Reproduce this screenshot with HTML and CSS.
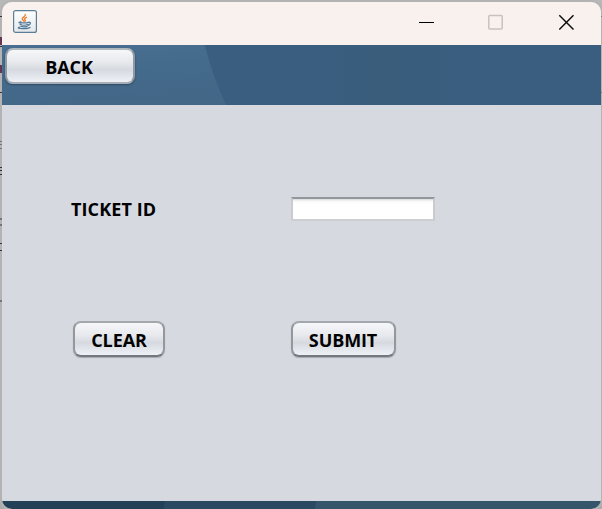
FILE: index.html
```html
<!DOCTYPE html>
<html lang="en">
<head>
<meta charset="utf-8">
<title>Ticket</title>
<link rel="stylesheet" href="styles.css">
</head>
<body>
<svg class="desktop" width="602" height="509" aria-hidden="true">
  <path d="M0 16.500h2M0 46.500h2M0 92.500h2M0 167.500h2M0 170.500h2M0 174.500h2M0 243.500h2M0 250.500h2" stroke="#333"/>
  <path d="M0 141.500h2M0 144.500h2M0 148.500h2" stroke="#74747a"/>
  <path d="M0 219h2M0 225h2M0 301h2" stroke="#74747a" stroke-width="2"/>
  <path d="M0 41h2M0 69h2" stroke="#643653" stroke-width="8"/>
  <path d="M601 16.500h1M601 92.500h1" stroke="#987653"/>
</svg>
<div class="window">
  <header class="titlebar">
    <svg class="java" width="24" height="24" viewBox="0 0 24 24">
      <defs><linearGradient id="tile" x2="0" y2="1"><stop stop-color="#fff"/><stop offset="1" stop-color="#e3e7ea"/></linearGradient></defs>
      <rect x=".6" y=".6" width="22.800" height="21.800" rx="2" fill="url(#tile)" stroke="#5b7e98" stroke-width="1.200"/>
      <g fill="none" stroke-linecap="round">
        <path d="M12.300 4.500c.8 2-3.600 2.700-3 4.700.2.700 1 1.200 1.400 1.900M13.500 7.400c-2 .9-2.500 1.600-1.400 2.600.5.500.2 1-.3 1.400" stroke="#ef8432" stroke-width="1.400"/>
        <path d="M8 11.800c-3.600.7-2 1.300 3.500 1.100 2 0 3.300-.3 4-.6M7 14.300c1.700 1 5.800 1 8 .2M7.700 16.200c1.900.8 4.700.8 6.400.1M15.500 12.300c3-.4 2.100 2.500-.3 3.100M6.300 17.200c-4.400 1.500 8.200 2.200 10.700.2" stroke="#547a99" stroke-width="1.300"/>
      </g>
    </svg>
    <svg class="controls" width="156" height="18" viewBox="0 0 156 18" fill="none">
      <path d="M0 9.500h15" stroke="#000"/>
      <rect x="69.800" y="2.600" width="13.400" height="13.400" rx="1" stroke="#c8c1be" stroke-width="1.500"/>
      <path d="M140.300 2.300l14.200 14.200M154.500 2.300L140.300 16.500" stroke="#111" stroke-width="1.500"/>
    </svg>
  </header>
  <nav class="toolbar">
    <svg class="art" width="599" height="60" aria-hidden="true">
      <defs>
        <linearGradient id="light" x2=".3" y2="1"><stop stop-color="#486f91"/><stop offset="1" stop-color="#426787"/></linearGradient>
        <linearGradient id="dark"><stop stop-color="#3a5e80"/><stop offset=".2" stop-color="#3a5e80"/><stop offset=".45" stop-color="#395d7b"/><stop offset=".75" stop-color="#3a5e80"/></linearGradient>
      </defs>
      <path d="M0 0h203q7 28 22 60H0z" fill="url(#light)"/>
      <path d="M202.500 0H599v60H224q-14-30-21.500-60z" fill="url(#dark)"/>
    </svg>
    <button class="button back">BACK</button>
  </nav>
  <main class="form">
    <label class="label" for="ticket">TICKET ID</label>
    <input class="field" id="ticket" type="text">
    <button class="button clear">CLEAR</button>
    <button class="button submit">SUBMIT</button>
  </main>
  <footer class="footer"></footer>
</div>
</body>
</html>
```
FILE: styles.css
```css
* { box-sizing: border-box; }
html, body { height: 100%; }
body {
  margin: 0;
  overflow: hidden;
  background: linear-gradient(#b8b8b8, #ababab);
  font: 600 18px/24px "Open Sans", "Noto Sans", sans-serif;
  color: #000;
}
.desktop { position: absolute; left: 0; top: 0; z-index: 1; pointer-events: none; }
.window {
  position: relative;
  display: grid;
  grid-template-rows: 43px 60px 396px 8px;
  width: 599px;
  height: 507px;
  margin: 2px 1px 0 2px;
  overflow: hidden;
  border-radius: 10px;
  background: #d6d9e0;
  box-shadow: 0 0 0 2px #b4b3b3;
}
.titlebar {
  display: flex;
  justify-content: space-between;
  background: #f9f1ee;
  padding: 8px 26px 0 11px;
}
.controls { margin-top: 3px; }
.toolbar { position: relative; padding: 3px; }
.art { position: absolute; left: 0; top: 0; }
.button {
  position: relative;
  height: 36px;
  padding: 2px 0 0;
  border: 2px solid;
  border-color: #a4a7ac #94979c #74777c;
  border-radius: 8px;
  background: linear-gradient(#f6f7f9 0%, #e7e9ed 38%, #d6d9df 62%, #eef1f6 100%);
  box-shadow: 0 1px 1px #a5a8b0;
  font: inherit;
  font-weight: 700;
  letter-spacing: -.1px;
  color: #000;
}
.back {
  display: block;
  width: 130px;
  padding-right: 2px;
  border-color: #b0b8bd #909aa5 #a7aeb7;
  box-shadow: 0 1px 2px #2d485f;
}
.form {
  display: grid;
  grid-template-columns: 220px 145px;
  grid-template-rows: 24px 37px;
  row-gap: 100px;
  align-content: start;
  padding: 92px 0 0 69px;
}
.label { font-weight: 700; letter-spacing: .1px; }
.field {
  width: 144px;
  height: 24px;
  border: 2px solid #c9cbcd;
  border-top-color: #93969b;
  border-bottom-color: #cdd0d3;
  background: linear-gradient(#d9dadd, #f7f7f7 2px, #fff 4px);
  outline: none;
}
.clear { width: 92px; margin-left: 2px; }
.submit { width: 105px; padding-right: 1px; }
.footer { background: linear-gradient(100deg, #234057 160px, #2b4a62 161px, #2b4a62 309px, #35566a 310px); }
```
